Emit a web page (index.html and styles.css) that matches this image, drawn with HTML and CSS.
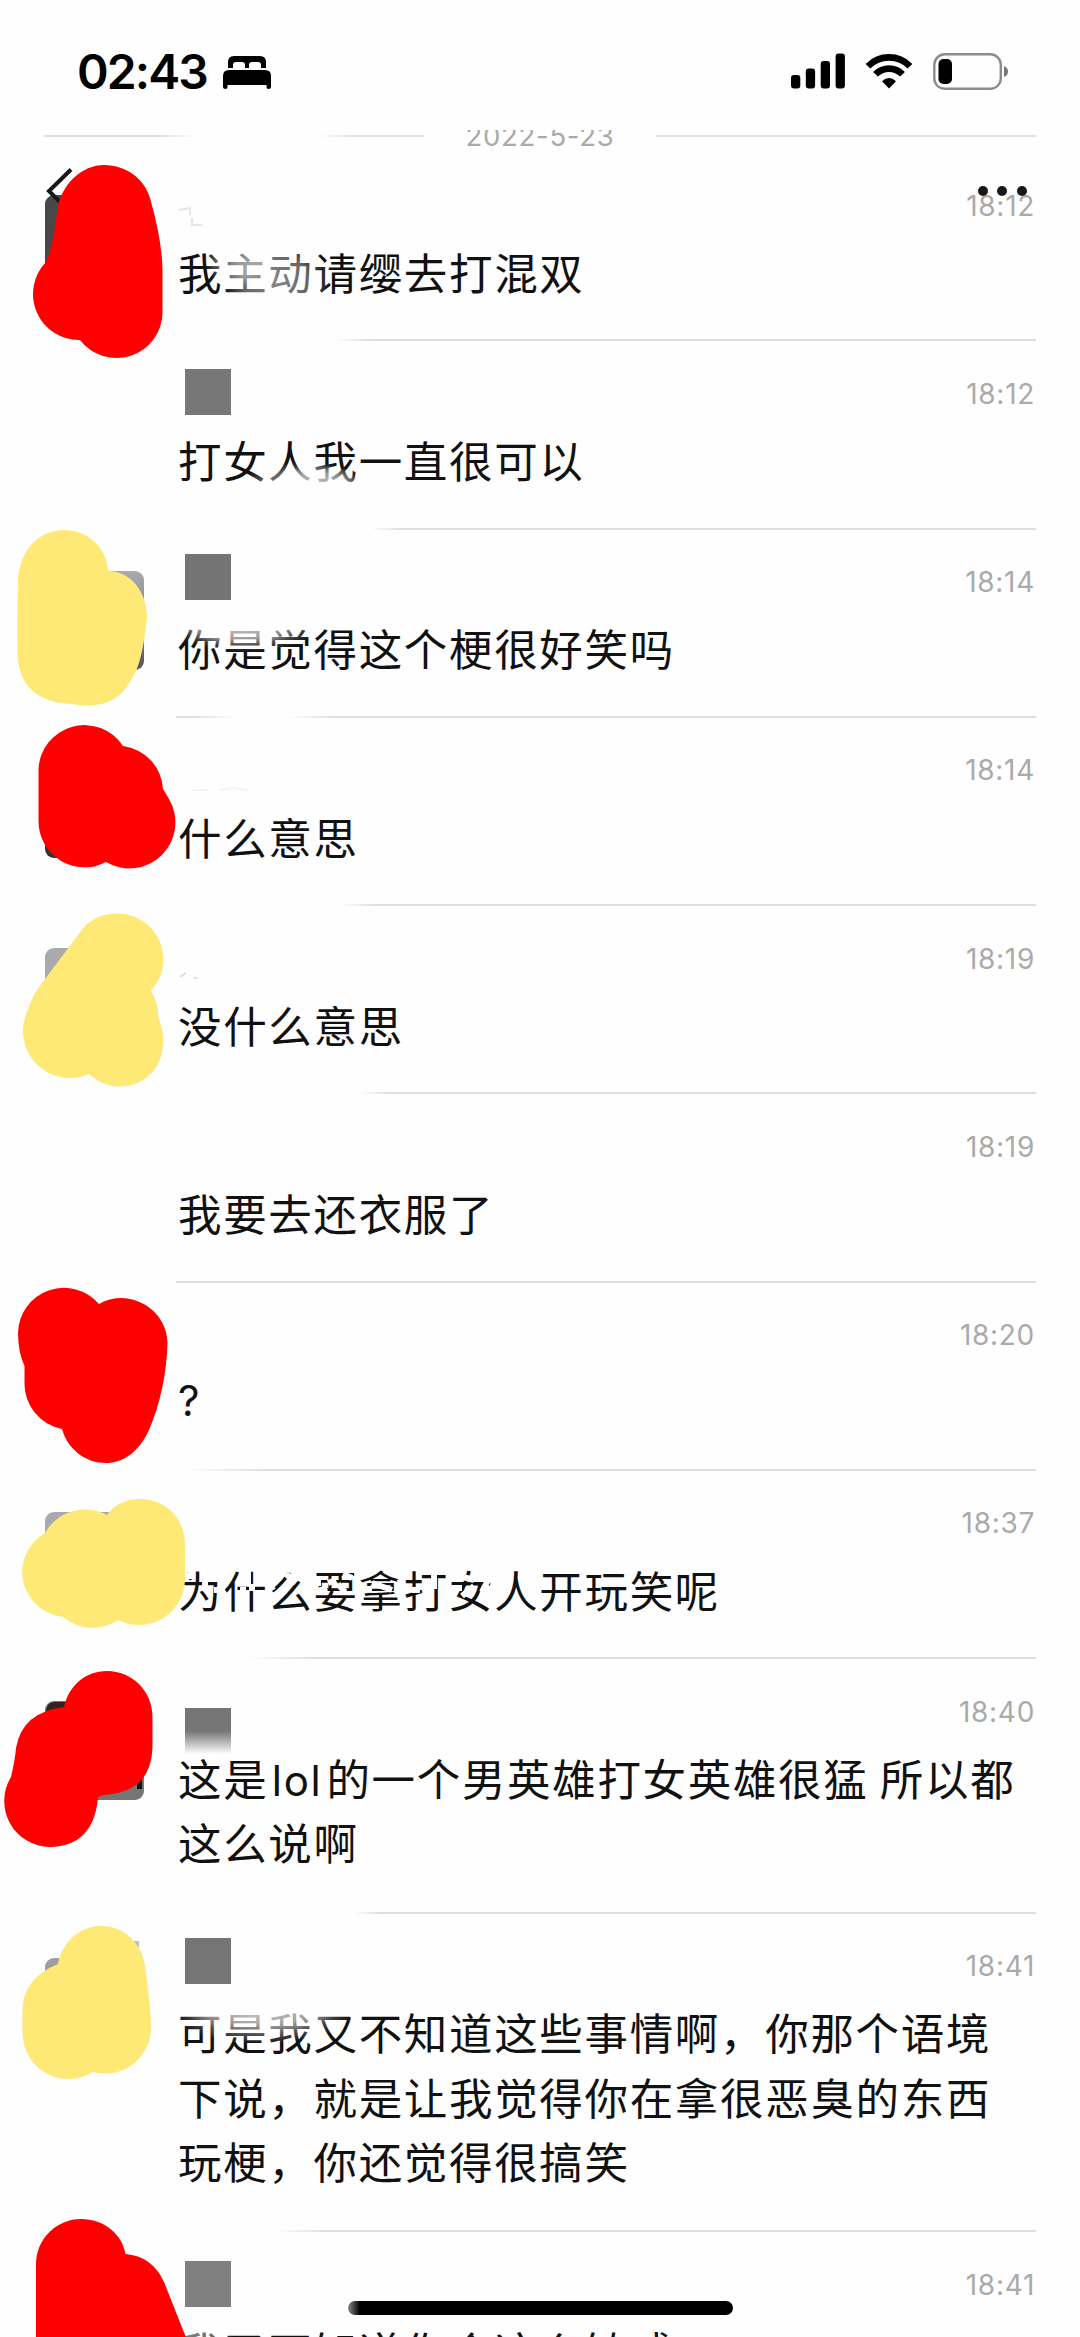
FILE: index.html
```html
<!DOCTYPE html>
<html lang="zh-CN">
<head>
<meta charset="utf-8">
<title>聊天记录</title>
<link rel="stylesheet" href="styles.css">
</head>
<body>
<div class="screen">
  <header class="status">
    <div class="status-left">
      <span class="clock">02:43</span>
      <svg class="bed" width="48" height="34" viewBox="0 0 48 34"><path d="M5 12V6Q5 0 11 0H37Q43 0 43 6V12H38V9Q38 6 35 6H29Q26 6 26 9V12H22V9Q22 6 19 6H13Q10 6 10 9V12ZM6 14H42Q48 14 48 20V31Q48 33 45.500 33Q43.500 33 43.500 31V29H4.500V31Q4.500 33 2.500 33Q0 33 0 31V20Q0 14 6 14Z"/></svg>
    </div>
    <div class="status-right">
      <svg width="54" height="36" viewBox="0 0 54 36"><rect x="0" y="22" width="9.300" height="13.500" rx="3"/><rect x="14.800" y="15.500" width="9.300" height="20" rx="3"/><rect x="29.700" y="8" width="9.300" height="27.500" rx="3"/><rect x="44.600" y="0.500" width="9.300" height="35" rx="3"/></svg>
      <svg width="48" height="36" viewBox="0 0 48 36"><g fill="none" stroke="#000" stroke-width="6.600"><path d="M3 13.200A29.500 29.500 0 0 1 45 13.200"/><path d="M10.500 21.300A18.800 18.800 0 0 1 37.500 21.300"/></g><path d="M24 35.500L17 28.200Q24 21.800 31 28.200Z"/></svg>
      <svg class="battery" width="76" height="37" viewBox="0 0 76 37"><rect x="1.300" y="1.300" width="66.500" height="34.500" rx="10.500" fill="none" stroke="#8c8c8c" stroke-width="2.400"/><rect x="5.500" y="6" width="13.500" height="25" rx="5"/><path d="M71 13Q75 14.500 75 18.500T71 24Z" fill="#777"/></svg>
    </div>
  </header>

  <div class="date-row">
    <span class="rule rule-left"></span>
    <span class="date">2022-5-23</span>
    <span class="rule"></span>
  </div>

  <ul class="messages">
    <li class="msg"><div class="meta"><time>18:12</time></div><p>我主动请缨去打混双</p></li>
    <li class="msg"><div class="meta"><time>18:12</time></div><p>打女人我一直很可以</p></li>
    <li class="msg"><div class="meta"><time>18:14</time></div><p>你是觉得这个梗很好笑吗</p></li>
    <li class="msg"><div class="meta"><time>18:14</time></div><p>什么意思</p></li>
    <li class="msg"><div class="meta"><time>18:19</time></div><p>没什么意思</p></li>
    <li class="msg"><div class="meta"><time>18:19</time></div><p>我要去还衣服了</p></li>
    <li class="msg"><div class="meta"><time>18:20</time></div><p class="latin">?</p></li>
    <li class="msg"><div class="meta"><time>18:37</time></div><p>为什么要拿打女人开玩笑呢</p></li>
    <li class="msg long"><div class="meta"><time>18:40</time></div><p>这是<span class="lol">lol</span>的一个男英雄打女英雄很猛 所以都<br>这么说啊</p></li>
    <li class="msg long"><div class="meta"><time>18:41</time></div><p>可是我又不知道这些事情啊，你那个语境<br>下说，就是让我觉得你在拿很恶臭的东西<br>玩梗，你还觉得很搞笑</p></li>
    <li class="msg"><div class="meta"><time>18:41</time></div><p>我又不知道你会这么敏感</p></li>
  </ul>

  <svg class="markup" width="1080" height="2337" viewBox="0 0 1080 2337">
    <defs>
      <radialGradient id="wipe"><stop offset="0" stop-color="#fefefe" stop-opacity=".5"/><stop offset=".6" stop-color="#fefefe" stop-opacity=".36"/><stop offset="1" stop-color="#fefefe" stop-opacity="0"/></radialGradient>
      <linearGradient id="fade" x1="0" y1="0" x2="0" y2="1"><stop offset="0" stop-color="#757575"/><stop offset=".5" stop-color="#757575"/><stop offset="1" stop-color="#757575" stop-opacity="0"/></linearGradient>
      <linearGradient id="pic" x1="0" y1="0" x2="0" y2="1"><stop offset="0" stop-color="#aaaab0"/><stop offset="1" stop-color="#55555a"/></linearGradient>
    </defs>

    <!-- softened text -->
    <ellipse cx="276" cy="282" rx="54" ry="44" fill="url(#wipe)"/>
    <ellipse cx="240" cy="262" rx="36" ry="24" fill="url(#wipe)"/>
    <ellipse cx="302" cy="486" rx="62" ry="24" fill="url(#wipe)"/>
    <ellipse cx="320" cy="484" rx="44" ry="20" fill="url(#wipe)"/>
    <ellipse cx="245" cy="626" rx="75" ry="26" fill="url(#wipe)"/>
    <ellipse cx="240" cy="626" rx="60" ry="20" fill="url(#wipe)"/>
    <ellipse cx="262" cy="2014" rx="90" ry="30" fill="url(#wipe)"/>
    <ellipse cx="262" cy="2012" rx="75" ry="20" fill="url(#wipe)"/>
    <ellipse cx="190" cy="2332" rx="45" ry="16" fill="url(#wipe)"/>
    <g fill="none" stroke="#fefefe" stroke-width="6">
      <path d="M183 1576H193M204 1571L216 1580M205 1588V1580M214 1590H220M248 1569V1584M252 1584V1591M240 1590H246M286 1574L296 1583M268 1590L274 1586M314 1592L327 1588M343 1574L352 1578M338 1584L345 1592M318 1577V1586M328 1583L336 1580M360 1589H372M372 1583L392 1590M398 1583L404 1580M424 1584V1590M434 1572V1589M412 1590H420M452 1588H462M463 1577L474 1580M474 1586L462 1596M490 1576L482 1592"/>
    </g>
    <g fill="none" stroke="#ddd" stroke-width="2">
      <path d="M179 210L190 208V215M192 218V225H202" stroke="#e6e6e6"/>
      <path d="M193 790H208M220 790L232 788L247 790" stroke="#f3f3f3"/>
      <path d="M180 977L186 973M194 978H197"/>
    </g>

    <!-- avatars -->
    <rect x="45" y="195" width="99" height="99" rx="9" fill="#484848"/>
    <rect x="45" y="571" width="99" height="99" rx="9" fill="url(#pic)"/>
    <rect x="45" y="760" width="99" height="98" rx="9" fill="#333"/>
    <rect x="45" y="948" width="99" height="99" rx="9" fill="#aaaaae"/>
    <rect x="45" y="1512" width="99" height="99" rx="9" fill="#a8a8b0"/>
    <rect x="45" y="1701" width="99" height="99" rx="9" fill="#757575"/>
    <path d="M46 1712Q47 1702 54 1702H75V1720H46Z" fill="#33211f"/>
    <path d="M137 1780L142 1776V1789H137Z" fill="#111"/>
    <rect x="45" y="1958" width="80" height="70" rx="9" fill="#9d9da4"/>
    <path d="M125 1941H139V1960H125Z" fill="#bbb"/>
    <path d="M71 169.500L49 191L60 202" fill="none" stroke="#181818" stroke-width="4"/>

    <!-- covered names -->
    <path d="M185 369H231V415H185Z" fill="#777"/>
    <path d="M185 554H231V600H185Z" fill="#747474"/>
    <path d="M185 1708H231V1754H185Z" fill="url(#fade)"/>
    <path d="M185 1938H231V1984H185Z" fill="#757575"/>
    <path d="M185 2261H231V2307H185Z" fill="#808080"/>

    <g class="red">
      <path d="M57.500 208C62 184 82 165 104 165C127 165 145 180 150 198Q162 240 162.500 270V313A46 46 0 0 1 80 340A46 46 0 0 1 46 262Q54 244 57.500 208Z"/>
      <path d="M38.500 769A46 46 0 0 1 123 746A46 46 0 0 1 163 789L169 799A46 46 0 0 1 106 862A46 46 0 0 1 38.500 821Z"/>
      <path d="M24.500 1366Q18 1352 18 1333A46 46 0 0 1 99 1304A46 46 0 0 1 167.500 1343Q166 1390 149 1430C138 1454 121 1463 106 1463C86 1463 68 1450 62 1429A46 46 0 0 1 24.500 1383Z"/>
      <path d="M64 1707C69 1685 86 1671 107 1671C132 1671 152.500 1691 152.500 1717V1748Q151 1792 104 1795L98 1797Q94 1846 50 1847A46 46 0 0 1 11 1777Q15 1760 16 1748Q22 1712 64 1707Z"/>
      <path d="M36 2340V2264A45 45 0 0 1 81 2219C104 2219 122 2234 125.500 2254Q152 2256 164 2282L187 2340Z"/>
    </g>
    <g class="yellow">
      <path d="M18 585C18 549 40 530 64 530C88 530 106 547 108.500 571C134 572 147 595 147 618Q142 665 132 678Q116 712 72 704Q20 702 17.500 655Q17 615 18 585Z"/>
      <path d="M84 927C94 917 105 913.500 117 913.500A46 46 0 0 1 163.500 960Q163.500 976 151 991Q158 1002 158.500 1018C172 1050 156 1086.500 119 1086.500Q102 1086.500 89 1074A47 47 0 0 1 27 1012Q32 995 45 979Z"/>
      <path d="M22 1572Q23 1547 45 1533A46 46 0 0 1 107 1515C114 1505 126 1499 140 1499C166 1499 185 1518 185 1545V1579A46 46 0 0 1 118 1620A46 46 0 0 1 63 1617A46 46 0 0 1 22 1572Z"/>
      <path d="M58 1964C62 1942 80 1926 101 1926C124 1926 142 1943 145 1966Q151 2010 151 2027A46 46 0 0 1 93 2072A46 46 0 0 1 22.500 2034V2008Q24 1978 58 1964Z"/>
    </g>
  </svg>

  <div class="more"><i></i><i></i><i></i></div>
  <div class="home-bar"></div>
</div>
</body>
</html>
```
FILE: styles.css
```css
* { box-sizing: border-box; }

body {
  margin: 0;
  background: #fefefe;
  font-family: "Inter", "Noto Sans CJK SC", sans-serif;
  color: #111;
}

.screen {
  position: relative;
  width: 1080px;
  height: 2337px;
  overflow: hidden;
}

.status {
  display: flex;
  justify-content: space-between;
  height: 130px;
  padding: 53px 71px 0 77px;
  color: #000;
}

.status-left { display: flex; align-items: flex-start; }
.clock {
  width: 146px;
  font-size: 48px;
  line-height: 38px;
  font-weight: 600;
  letter-spacing: -1.900px;
}
.bed { margin-top: 3px; }
.status-right { display: flex; align-items: flex-start; gap: 20px; }

.date-row {
  display: flex;
  height: 22px;
  padding: 0 44px;
  overflow: hidden;
}
.rule { flex: 1; height: 2px; margin-top: 5px; background: #e2e2e2; }
.rule-left {
  background: linear-gradient(to right, #dedede 0 110px, transparent 155px 275px, #e2e2e2 310px);
}
.date {
  width: 232px;
  margin-top: -12px;
  font-size: 27.500px;
  line-height: 36px;
  letter-spacing: 0.700px;
  text-align: center;
  color: #aaa;
}

.messages { margin: 0; padding: 0; list-style: none; }

.msg {
  --from: 0px;
  --to: 0px;
  position: relative;
  padding: 0 44px 36.300px 178px;
}
.msg.long { padding-bottom: 38px; }

.msg::after {
  content: "";
  position: absolute;
  left: 176px;
  right: 44px;
  bottom: -1px;
  height: 2px;
  background: linear-gradient(to right, transparent var(--from), #dedede var(--to));
}
.msg:nth-child(1) { --from: 160px; --to: 195px; }
.msg:nth-child(2) { --from: 195px; --to: 225px; }
.msg:nth-child(3)::after {
  background: linear-gradient(to right, #dedede 0 15px, transparent 60px 112px, #dedede 160px);
}
.msg:nth-child(4) { --from: 165px; --to: 200px; }
.msg:nth-child(5) { --from: 183px; --to: 215px; }
.msg:nth-child(7) { --from: 8px; --to: 90px; }
.msg:nth-child(8) { --from: 70px; --to: 140px; }
.msg:nth-child(9) { --from: 178px; --to: 205px; }
.msg:nth-child(10) { --from: 100px; --to: 150px; }

.meta {
  display: flex;
  justify-content: flex-end;
  height: 87.700px;
  padding: 36.500px 1px 0 0;
}
.meta time {
  font-size: 28px;
  line-height: 35px;
  letter-spacing: 0.700px;
  color: #aaa;
}

.msg p {
  margin: 0;
  font-family: "Noto Sans CJK SC", sans-serif;
  font-size: 43.500px;
  line-height: 64.300px;
  letter-spacing: 1.670px;
  white-space: nowrap;
  font-weight: 400;
}
.msg p.latin, .lol { font-family: "Inter", sans-serif; font-size: 42px; }
.lol { line-height: 1; padding: 0 4px 0 3.500px; }

.markup { position: absolute; left: 0; top: 0; }
.red { fill: #f00; }
.yellow { fill: #fee977; }

.more {
  position: absolute;
  left: 978px;
  top: 186px;
  display: flex;
  gap: 9.300px;
}
.more i { width: 10px; height: 10px; border-radius: 50%; background: #181818; }

.home-bar {
  position: absolute;
  left: 348px;
  top: 2301px;
  width: 385px;
  height: 14px;
  border-radius: 7px;
  background: linear-gradient(to right, #888, #000 12px);
}
```
